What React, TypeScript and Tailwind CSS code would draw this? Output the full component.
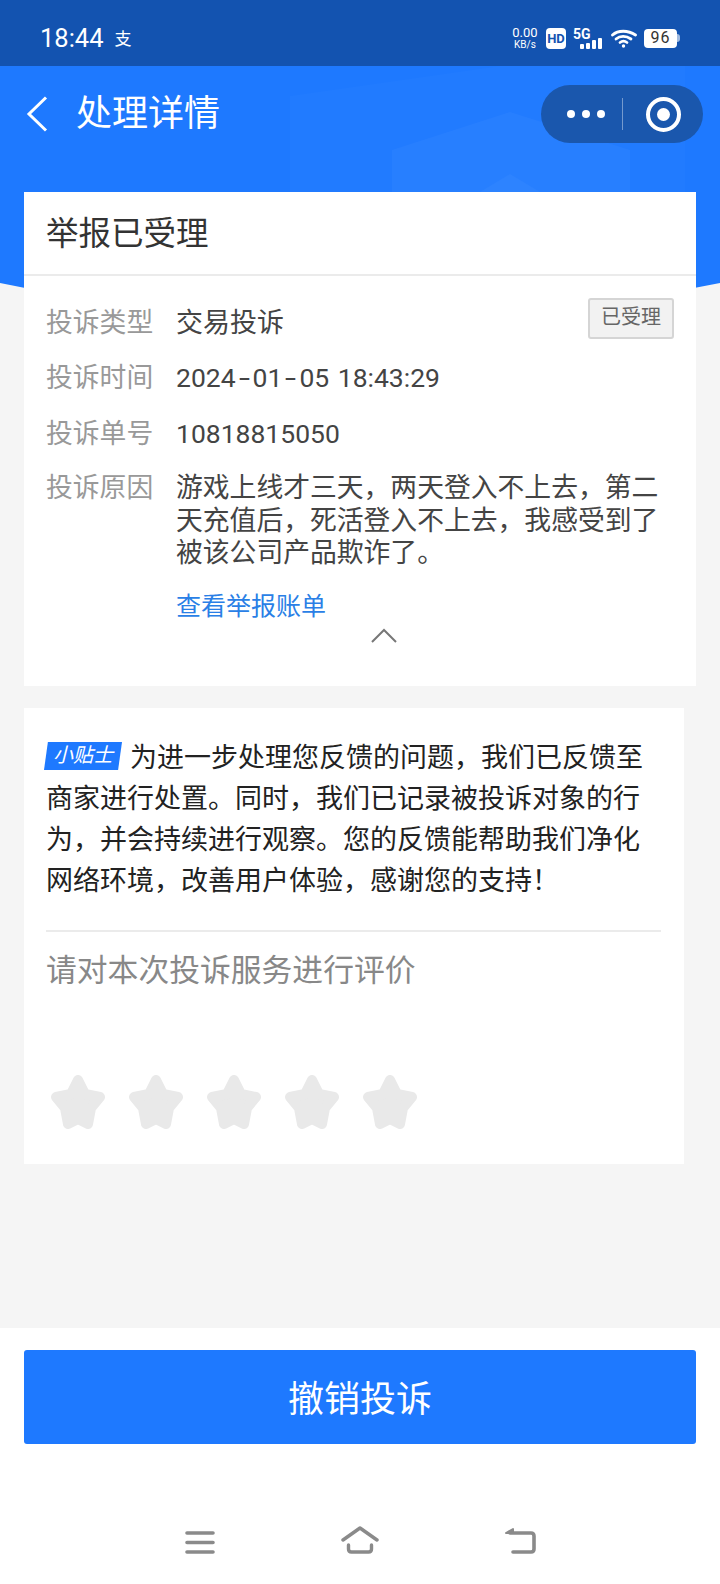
const Star = () => (
  <svg width="54" height="54" viewBox="0 0 54 54">
    <path
      d="M27 5 L34 19 L49 22 L40 33 L37 49 L27 44 L17 49 L14 33 L5 22 L20 19 Z"
      fill="#e9e9e9"
      stroke="#e9e9e9"
      strokeWidth="10"
      strokeLinejoin="round"
    />
  </svg>
);

const Dash = () => <span className="inline-block w-[17px] text-center scale-x-150">-</span>;

const rows = [
  { label: "投诉类型", value: <span className="text-[27px]">交易投诉</span>, cls: "" },
  {
    label: "投诉时间",
    value: (
      <span className="[word-spacing:2px]">
        2024<Dash />01<Dash />05 18:43:29
      </span>
    ),
    cls: "",
  },
  { label: "投诉单号", value: "10818815050", cls: "mt-[1px]" },
];

const StatusBar = () => (
  <div className="relative h-[66px] bg-[#1353b0] flex items-center justify-between pl-10 pr-[40px] pt-[14px] pb-[4px] text-white">
    <div className="flex items-center gap-[11px] pt-[2px]">
      <span className="text-[25.5px] leading-none">18:44</span>
      <span className="text-[17px] leading-none">支</span>
    </div>
    <div className="flex items-center">
      <div className="w-[26px] flex flex-col items-center">
        <span className="text-[13px] leading-[12px]">0.00</span>
        <span className="text-[10px] leading-[11px]">KB/s</span>
      </div>
      <div className="ml-[8px] w-5 h-[21px] bg-white rounded-[4px] flex items-center justify-center text-[13px] leading-none font-bold text-[#1353b0]">
        HD
      </div>
      <div className="relative ml-[7px] w-[30px] h-[21px]">
        <span className="absolute left-0 -top-[1px] text-[14px] leading-none font-bold">5G</span>
        <svg className="absolute left-[7px] bottom-0" width="23" height="11" viewBox="0 0 23 11" fill="#fff">
          <rect x="0" y="6" width="4" height="5" rx="1" />
          <rect x="6" y="5" width="4" height="6" rx="1" />
          <rect x="12" y="2" width="4" height="9" rx="1" />
          <rect x="18" y="0" width="4" height="11" rx="1" />
        </svg>
      </div>
      <svg className="ml-[8px]" width="26" height="19" viewBox="0 0 26 19" fill="none" stroke="#fff" strokeWidth="2.8" strokeLinecap="round">
        <path d="M1.5 6 C7 1 17 1 24.5 6" />
        <path d="M5 10 C9 6.5 15 6.5 20 10" />
        <path d="M9 13.5 C11 12 14 12 16 13.5" />
        <circle cx="12.5" cy="17" r="1.7" fill="#fff" stroke="none" />
      </svg>
      <div className="ml-[7px] flex items-center">
        <div className="w-[33px] h-[19px] bg-white rounded-[4px] flex items-center justify-center text-[16px] leading-none tracking-[1px] text-[#333]">
          96
        </div>
        <div className="w-[3px] h-2 bg-white/60 rounded-r" />
      </div>
    </div>
  </div>
);

const App = () => {
  return (
    <div
      className="w-[720px] h-[1584px] bg-[#f5f5f5] flex flex-col overflow-hidden"
      style={{ fontFamily: 'Roboto, "Noto Sans CJK SC", sans-serif' }}
    >
      <StatusBar />

      <div className="relative flex-1 flex flex-col">
        {/* blue header behind the first card */}
        <svg className="absolute left-0 top-0" width="720" height="260" viewBox="0 0 720 260">
          <path d="M0 0 H720 V217 Q360 292 0 217 Z" fill="#1e79ff" />
          <path d="M290 126 V30 L500 0 L685 0 V126 Z" fill="#fff" opacity="0.015" />
          <path d="M392 126 V84 L510 46 L630 84 V126 Z" fill="#fff" opacity="0.03" />
          <path d="M480 126 L510 108 L540 126 Z" fill="#fff" opacity="0.03" />
        </svg>

        <div className="relative h-[126px] flex items-start justify-between pl-[24px] pr-[17px] pt-[19px] text-white">
          <div className="flex items-center h-[58px]">
            <svg width="28" height="40" viewBox="0 0 28 40" fill="none" stroke="#fff" strokeWidth="3">
              <path d="M22 3.5 L5 20 L22 36.5" />
            </svg>
            <span className="ml-[24px] text-[36px] leading-none">处理详情</span>
          </div>
          <div className="w-[162px] h-[58px] rounded-full bg-[#1a57ad] flex items-center">
            <div className="w-[81px] flex items-center justify-center gap-[7px] pl-[9px]">
              <span className="w-2 h-2 rounded-full bg-white" />
              <span className="w-2 h-2 rounded-full bg-white" />
              <span className="w-2 h-2 rounded-full bg-white" />
            </div>
            <div className="w-px h-[32px] bg-white/40" />
            <div className="flex-1 flex items-center justify-center">
              <div className="w-[35px] h-[35px] rounded-full border-[4px] border-white flex items-center justify-center">
                <span className="w-[13px] h-[13px] rounded-full bg-white" />
              </div>
            </div>
          </div>
        </div>

        <div className="relative mx-6 bg-white">
          <div className="h-[84px] flex items-center pl-[22px] pt-[3px] border-b-2 border-[#ebebeb] text-[32.5px] leading-none text-[#333]">
            举报已受理
          </div>
          <div className="relative px-[22px] pt-[29px] h-[410px]">
            <div className="absolute right-[22px] top-[22px] w-[86px] h-[41px] rounded-[3px] border-2 border-[#d5d5d5] bg-[#f2f2f2] flex items-center justify-center pb-[3px] text-[20px] leading-none text-[#666]">
              已受理
            </div>
            <div className="flex flex-col gap-[19px]">
              {rows.map((r) => (
                <div key={r.label} className={`flex items-center h-[36px] text-[26.5px] leading-none ${r.cls}`}>
                  <span className="w-[130px] text-[26.8px] text-[#999]">{r.label}</span>
                  <span className="text-[#444]">{r.value}</span>
                </div>
              ))}
              <div className="flex mt-[1px] text-[26.8px] leading-[32.5px]">
                <span className="w-[130px] shrink-0 text-[#999]">投诉原因</span>
                <div className="w-[490px] text-[#444]">
                  游戏上线才三天，两天登入不上去，第二天充值后，死活登入不上去，我感受到了被该公司产品欺诈了。
                </div>
              </div>
            </div>
            <div className="ml-[130px] mt-[19px] text-[25px] leading-[36px] text-[#2a7fe6]">查看举报账单</div>
            <div className="flex justify-center pl-[48px] mt-[3px]">
              <svg width="26" height="15" viewBox="0 0 26 15" fill="none" stroke="#777" strokeWidth="2">
                <path d="M1 14 L13 2 L25 14" />
              </svg>
            </div>
          </div>
        </div>

        <div className="relative ml-6 w-[660px] mt-[22px] h-[456px] bg-white pt-[30px] px-[22px]">
          <div className="text-[27px] leading-[41px] text-[#222] w-[600px]">
            <span className="inline-block align-[5px] -ml-[2px] mr-[8px] w-[78px] h-[28px] bg-[#1e79ff] [clip-path:polygon(5%_0,100%_0,95%_100%,0_100%)] text-center text-[20px] leading-[27px] italic text-white">
              小贴士
            </span>
            为进一步处理您反馈的问题，我们已反馈至商家进行处置。同时，我们已记录被投诉对象的行为，并会持续进行观察。您的反馈能帮助我们净化网络环境，改善用户体验，感谢您的支持！
          </div>
          <div className="mt-[28px] h-[2px] w-[615px] bg-[#ebebeb]" />
          <div className="mt-[19px] text-[30.8px] leading-[40px] text-[#888]">请对本次投诉服务进行评价</div>
          <div className="mt-[84px] ml-[5px] flex gap-[24px]">
            <Star />
            <Star />
            <Star />
            <Star />
            <Star />
          </div>
        </div>
      </div>

      <div className="h-[256px] bg-white px-6 pt-[22px]">
        <div className="h-[94px] rounded-[3px] bg-[#1e79ff] flex items-center justify-center pt-[6px] text-[36px] leading-none text-white">
          撤销投诉
        </div>
        <div className="mt-[82px] flex items-end justify-between pl-[161px] pr-[160px]">
          <svg width="30" height="23" viewBox="0 0 30 23" fill="none" stroke="#8a8a8a" strokeWidth="3.6" strokeLinecap="round">
            <path d="M2 2 H28 M2 11.5 H28 M2 21 H28" />
          </svg>
          <svg width="38" height="28" viewBox="0 0 38 28" fill="none" stroke="#8a8a8a" strokeWidth="3.4" strokeLinecap="round" strokeLinejoin="round">
            <path d="M2 14 L19 2 L36 14" />
            <path d="M7.5 19 V23 Q7.5 26 10.5 26 H27.5 Q30.5 26 30.5 23 V19" />
          </svg>
          <svg width="32" height="27" viewBox="0 0 32 27" fill="none" stroke="#8a8a8a" strokeWidth="3.6" strokeLinecap="round" strokeLinejoin="round">
            <path d="M9 25 H27 Q30 25 30 22 V9 Q30 6 27 6 H6" />
            <path d="M2 6 L9 2 V6 Z" fill="#8a8a8a" strokeWidth="2" />
          </svg>
        </div>
      </div>
    </div>
  );
};

export default App;
